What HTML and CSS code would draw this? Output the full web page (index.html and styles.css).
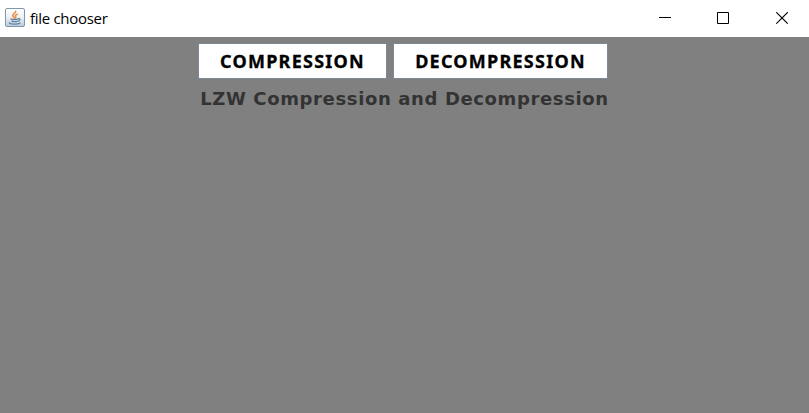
FILE: index.html
```html
<!DOCTYPE html>
<html lang="en">
<head>
<meta charset="utf-8">
<title>file chooser</title>
<link rel="stylesheet" href="styles.css">
</head>
<body>
<div class="window">
  <header class="titlebar">
    <svg class="app-icon" width="20" height="20" viewBox="0 0 20 20">
      <defs>
        <linearGradient id="tile" x1="0" y1="0" x2="0" y2="1">
          <stop offset="0" stop-color="#ffffff"/>
          <stop offset=".45" stop-color="#eff3f6"/>
          <stop offset="1" stop-color="#b9cad8"/>
        </linearGradient>
      </defs>
      <rect x=".5" y=".5" width="19" height="18" rx="1.5" fill="url(#tile)" stroke="#7f98ab"/>
      <g fill="none" stroke-linecap="round">
        <path d="M10.7 3.2C11 5.2 7.4 5.7 7.8 7.7C7.9 8.7 9.1 9.2 9.3 10.2M12.3 6.2C10.3 6.9 9.9 7.7 10.6 8.6C11 9.2 10.8 9.8 10.2 10.2" stroke="#e8924e" stroke-width="1.6"/>
        <path d="M6 10.9C7 11.8 11.7 11.7 13 11M6.8 13.1C8 13.9 11.3 13.8 12.4 13.2M13.3 10.8C15.5 10.2 15.5 12.5 13 13.2M4.5 14.8C3.5 16.2 12.3 16.6 15 15.1" stroke="#6486a3" stroke-width="1.3"/>
      </g>
    </svg>
    <span class="title">file chooser</span>
    <div class="controls">
      <svg class="control" viewBox="0 0 13 13"><path d="M1 5.5H13"/></svg>
      <svg class="control" viewBox="0 0 13 13"><path d="M.5.5H11.5V11.5H.5Z"/></svg>
      <svg class="control close" viewBox="0 0 13 13"><path d="M.3.3L11.7 11.7M11.7.3L.3 11.7"/></svg>
    </div>
  </header>
  <main class="content">
    <div class="actions">
      <button class="action compress">COMPRESSION</button>
      <button class="action decompress">DECOMPRESSION</button>
    </div>
    <div class="caption">LZW Compression and Decompression</div>
  </main>
</div>
</body>
</html>
```
FILE: styles.css
```css
body {
  margin: 0;
  background: #808080;
}

.window {
  display: flex;
  flex-direction: column;
  height: 413px;
  overflow: hidden;
}

.titlebar {
  display: flex;
  align-items: center;
  box-sizing: border-box;
  height: 37px;
  padding: 0 20px 0 5px;
  background: #fff;
}

.app-icon {
  margin-top: -1px;
}

.title {
  margin: -2px 0 0 5px;
  font: 15px/20px "Open Sans", "Noto Sans", sans-serif;
  letter-spacing: -0.3px;
  color: #000;
}

.controls {
  display: flex;
  gap: 46px;
  margin-left: auto;
}

.control {
  width: 13px;
  height: 13px;
  fill: none;
  stroke: #000;
  stroke-width: 1;
}

.close {
  stroke-width: 1.2;
}

.content {
  display: flex;
  flex: 1;
  flex-direction: column;
  align-items: center;
  padding-top: 6px;
  background: #808080;
}

.actions {
  display: flex;
  gap: 6px;
  margin-right: 3px;
}

.action {
  box-sizing: border-box;
  height: 36px;
  padding: 0;
  border: 1px solid #7a8a99;
  border-radius: 0;
  background: #fff;
  color: #000;
  font: bold 18px/34px "Noto Sans", sans-serif;
  letter-spacing: 1.25px;
  -webkit-text-stroke: 0.3px #000;
  white-space: nowrap;
}

.compress {
  width: 189px;
}

.decompress {
  width: 215px;
}

.caption {
  margin-top: 9px;
  font: bold 18px/22px "DejaVu Sans", sans-serif;
  letter-spacing: 0.63px;
  color: #333;
  white-space: nowrap;
}
```
